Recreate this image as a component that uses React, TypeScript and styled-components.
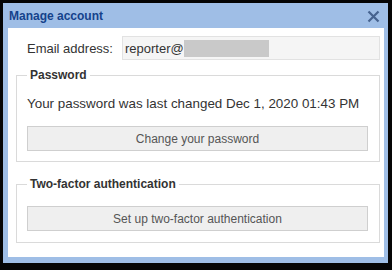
import React from "react";
import styled, { createGlobalStyle } from "styled-components";

const Global = createGlobalStyle`
  html, body { margin: 0; padding: 0; background: #050505; }
  body { font-family: "Liberation Sans", Arial, sans-serif; }
  #root { padding: 3px 4px 7px 3px; }
`;

const Win = styled.div`
  background: #9fbee6;
  width: 385px;
  height: 260px;
  display: flex;
  flex-direction: column;
  box-sizing: border-box;
  padding: 0 4px 6px 5px;
`;

const TitleBar = styled.div`
  height: 24px;
  display: flex;
  align-items: center;
  justify-content: space-between;
  padding: 1px 4px 0 1px;
`;

const Title = styled.div`
  font-weight: bold;
  font-size: 12px;
  color: #15428b;
`;

const Close = styled.svg`
  width: 13px;
  height: 13px;
  display: block;
`;

const Body = styled.div`
  flex: 1;
  background: #ffffff;
  padding: 8px 4px 0 8px;
  display: flex;
  flex-direction: column;
`;

const EmailRow = styled.div`
  display: flex;
  align-items: center;
  padding-left: 11px;
  height: 24px;
`;

const Label = styled.div`
  width: 95px;
  flex: none;
  font-size: 13px;
  color: #333;
`;

const Input = styled.div`
  flex: 1;
  height: 24px;
  box-sizing: border-box;
  border: 1px solid #e2e2e2;
  background: #f5f5f5;
  display: flex;
  align-items: center;
  padding-left: 2px;
  font-size: 13px;
  color: #333;
`;

const Redact = styled.span`
  display: inline-block;
  width: 85px;
  height: 17px;
  background: #c9c9c9;
`;

const Group = styled.fieldset<{ $top: number; $bottom: number }>`
  margin: ${(p) => p.$top}px 0 0 0;
  border: 1px solid #dadada;
  padding: 0 11px ${(p) => p.$bottom}px 10px;
  display: flex;
  flex-direction: column;
`;

const Legend = styled.legend`
  font-weight: bold;
  font-size: 12px;
  line-height: 14px;
  color: #333;
  padding: 0 3px;
`;

const Info = styled.div`
  font-size: 13.4px;
  line-height: 16px;
  color: #333;
  margin-top: 14px;
`;

const Button = styled.button<{ $mt: number }>`
  margin-top: ${(p) => p.$mt}px;
  height: 25px;
  box-sizing: border-box;
  border: 1px solid #cfcfcf;
  background: #efefef;
  font-family: "Liberation Sans", Arial, sans-serif;
  font-size: 12px;
  color: #555;
  padding: 0;
`;

export default function App() {
  return (
    <>
      <Global />
      <Win>
        <TitleBar>
          <Title>Manage account</Title>
          <Close viewBox="0 0 13 13">
            <path d="M1.5 1.5 L11.5 11.5 M11.5 1.5 L1.5 11.5" stroke="#46638f" strokeWidth="2.2" />
          </Close>
        </TitleBar>
        <Body>
          <EmailRow>
            <Label>Email address:</Label>
            <Input>
              reporter@<Redact />
            </Input>
          </EmailRow>
          <Group $top={8} $bottom={10}>
            <Legend>Password</Legend>
            <Info>Your password was last changed Dec 1, 2020 01:43 PM</Info>
            <Button $mt={14}>Change your password</Button>
          </Group>
          <Group $top={15} $bottom={11}>
            <Legend>Two-factor authentication</Legend>
            <Button $mt={15}>Set up two-factor authentication</Button>
          </Group>
        </Body>
      </Win>
    </>
  );
}
